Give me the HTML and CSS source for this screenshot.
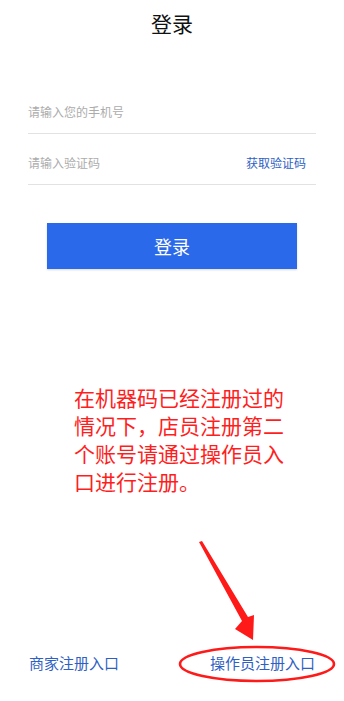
FILE: index.html
```
<!DOCTYPE html>
<html lang="zh-CN">
<head>
  <meta charset="UTF-8">
  <meta name="viewport" content="width=device-width, initial-scale=1.0">
  <title>登录</title>
  <link rel="stylesheet" href="styles.css">
</head>
<body>
  <div class="page">
    <h1 class="title">登录</h1>

    <!-- Login form -->
    <div class="login-form">
      <div class="field-row phone-row">
        <input type="text" class="field-input" placeholder="请输入您的手机号">
      </div>
      <div class="field-row code-row">
        <input type="text" class="field-input" placeholder="请输入验证码">
        <a class="get-code" href="#">获取验证码</a>
      </div>
      <button class="login-btn">登录</button>
    </div>

    <!-- Annotation note -->
    <p class="note">在机器码已经注册过的情况下，店员注册第二个账号请通过操作员入口进行注册。</p>

    <!-- Register links -->
    <div class="footer-links">
      <a href="#">商家注册入口</a>
      <a href="#">操作员注册入口</a>
    </div>

    <!-- Red arrow + circle drawn over the screenshot -->
    <svg class="markup" width="344" height="701" viewBox="0 0 344 701">
      <polygon points="199,542 202,541 248,617 254,615 253,640 235,629 242,621" fill="#ff1a1a"/>
      <ellipse cx="257" cy="664" rx="77" ry="17" fill="none" stroke="#ff1a1a" stroke-width="2.6"/>
    </svg>
  </div>
</body>
</html>
```

FILE: styles.css
```
* {
  box-sizing: border-box;
}

body {
  margin: 0;
  padding: 0;
  background: #fff;
  font-family: "Noto Sans CJK SC", "Noto Sans", sans-serif;
  color: #111;
}

.page {
  position: relative;
  min-height: 100vh;
  display: flex;
  flex-direction: column;
}

.title {
  margin: 0;
  height: 46px;
  line-height: 46px;
  text-align: center;
  font-size: 21px;
  font-weight: normal;
  color: #111;
}

.login-form {
  margin-top: 42px;
  padding: 0 28px;
  display: flex;
  flex-direction: column;
}

.field-row {
  display: flex;
  align-items: flex-end;
  justify-content: space-between;
  padding-bottom: 11px;
  border-bottom: 1px solid #e2e2e2;
}

.phone-row {
  height: 46px;
}

.code-row {
  height: 51px;
}

.field-input {
  flex: 1;
  min-width: 0;
  border: none;
  outline: none;
  padding: 0;
  height: 20px;
  line-height: 20px;
  font-family: inherit;
  font-size: 12px;
  color: #333;
  background: transparent;
}

.field-input::placeholder {
  color: #acacac;
}

.get-code {
  line-height: 20px;
  font-size: 12px;
  color: #2f5fc4;
  text-decoration: none;
  padding-right: 10px;
}

.login-btn {
  align-self: center;
  width: 250px;
  height: 46px;
  margin-top: 38px;
  border: none;
  background: #2a69ea;
  color: #fff;
  font-family: inherit;
  font-size: 18px;
  cursor: pointer;
  box-shadow: 0 1px 2px rgba(0, 0, 0, 0.15);
}

.note {
  margin: 114px 0 0 74px;
  width: 212px;
  font-size: 21px;
  line-height: 28px;
  color: #ff1e1e;
}

.footer-links {
  margin-top: auto;
  padding: 0 29px 28px;
  display: flex;
  justify-content: space-between;
}

.footer-links a {
  font-size: 15px;
  line-height: 20px;
  color: #2f5fc4;
  text-decoration: none;
}

.markup {
  position: absolute;
  top: 0;
  left: 0;
  pointer-events: none;
}
```
